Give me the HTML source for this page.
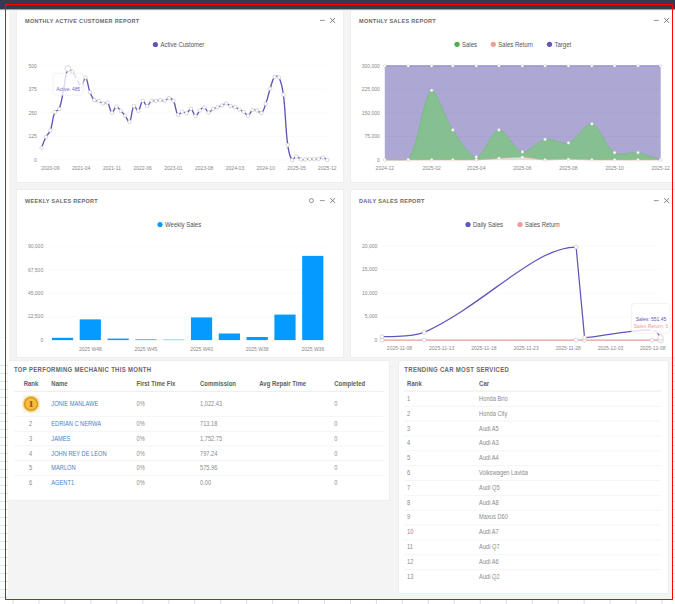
<!DOCTYPE html>
<html><head><meta charset="utf-8"><title>Dashboard</title>
<style>
html,body{margin:0;padding:0;width:675px;height:604px;overflow:hidden;background:#fff;}
svg{display:block;font-family:'Liberation Sans', sans-serif;}
</style></head>
<body>
<svg width="675" height="604" viewBox="0 0 675 604">
<rect x="0" y="0" width="675" height="604" fill="#ffffff" />
<rect x="9" y="11" width="666" height="350" fill="#f4f4f4" />
<rect x="8" y="361" width="664" height="238" fill="#f4f4f4" />
<rect x="16.5" y="10.5" width="327" height="172" rx="0" fill="none" stroke="rgba(0,0,0,0.025)" stroke-width="1"/>
<rect x="17" y="11" width="326" height="171" fill="#ffffff" rx="0"/>
<rect x="350.5" y="10.5" width="327" height="172" rx="0" fill="none" stroke="rgba(0,0,0,0.025)" stroke-width="1"/>
<rect x="351" y="11" width="326" height="171" fill="#ffffff" rx="0"/>
<rect x="16.5" y="189.5" width="327" height="168" rx="0" fill="none" stroke="rgba(0,0,0,0.025)" stroke-width="1"/>
<rect x="17" y="190" width="326" height="167" fill="#ffffff" rx="0"/>
<rect x="350.5" y="189.5" width="327" height="168" rx="0" fill="none" stroke="rgba(0,0,0,0.025)" stroke-width="1"/>
<rect x="351" y="190" width="326" height="167" fill="#ffffff" rx="0"/>
<rect x="7.5" y="360.5" width="382" height="140" rx="2" fill="none" stroke="rgba(0,0,0,0.025)" stroke-width="1"/>
<rect x="8" y="361" width="381" height="139" fill="#ffffff" rx="2"/>
<rect x="398.5" y="360.5" width="270" height="233" rx="2" fill="none" stroke="rgba(0,0,0,0.025)" stroke-width="1"/>
<rect x="399" y="361" width="269" height="232" fill="#ffffff" rx="2"/>
<text x="25.00" y="23.00" font-size="5.5" fill="#686868" text-anchor="start" font-weight="bold" letter-spacing="0.3">MONTHLY ACTIVE CUSTOMER REPORT</text>
<path d="M319.90000000000003,20.4 h4.8" stroke="#777777" stroke-width="0.8"/>
<path d="M330.1,18.0 l5,4.8 M330.1,22.799999999999997 l5,-4.8" stroke="#777777" stroke-width="0.95"/>
<circle cx="155.4" cy="44.5" r="2.6" fill="#5f56ba"/>
<text transform="translate(160.40,46.80) scale(1,1.12)" font-size="6" fill="#525252" text-anchor="start" font-weight="normal" >Active Customer</text>
<path d="M41.6,160.00 H327.3" stroke="#f6f6f6" stroke-width="0.6"/>
<text x="36.90" y="161.80" font-size="5" fill="#888888" text-anchor="end" font-weight="normal" >0</text>
<path d="M41.6,136.45 H327.3" stroke="#f6f6f6" stroke-width="0.6"/>
<text x="36.90" y="138.25" font-size="5" fill="#888888" text-anchor="end" font-weight="normal" >125</text>
<path d="M41.6,112.90 H327.3" stroke="#f6f6f6" stroke-width="0.6"/>
<text x="36.90" y="114.70" font-size="5" fill="#888888" text-anchor="end" font-weight="normal" >250</text>
<path d="M41.6,89.35 H327.3" stroke="#f6f6f6" stroke-width="0.6"/>
<text x="36.90" y="91.15" font-size="5" fill="#888888" text-anchor="end" font-weight="normal" >375</text>
<path d="M41.6,65.80 H327.3" stroke="#f6f6f6" stroke-width="0.6"/>
<text x="36.90" y="67.60" font-size="5" fill="#888888" text-anchor="end" font-weight="normal" >500</text>
<text x="50.39" y="170.00" font-size="5" fill="#888888" text-anchor="middle" font-weight="normal" >2020-09</text>
<text x="81.16" y="170.00" font-size="5" fill="#888888" text-anchor="middle" font-weight="normal" >2021-04</text>
<text x="111.93" y="170.00" font-size="5" fill="#888888" text-anchor="middle" font-weight="normal" >2021-11</text>
<text x="142.69" y="170.00" font-size="5" fill="#888888" text-anchor="middle" font-weight="normal" >2022-06</text>
<text x="173.46" y="170.00" font-size="5" fill="#888888" text-anchor="middle" font-weight="normal" >2023-01</text>
<text x="204.23" y="170.00" font-size="5" fill="#888888" text-anchor="middle" font-weight="normal" >2023-08</text>
<text x="235.00" y="170.00" font-size="5" fill="#888888" text-anchor="middle" font-weight="normal" >2024-03</text>
<text x="265.76" y="170.00" font-size="5" fill="#888888" text-anchor="middle" font-weight="normal" >2024-10</text>
<text x="296.53" y="170.00" font-size="5" fill="#888888" text-anchor="middle" font-weight="normal" >2025-05</text>
<text x="327.30" y="170.00" font-size="5" fill="#888888" text-anchor="middle" font-weight="normal" >2025-12</text>
<path d="M41.60,147.75 C41.60,147.75 43.91,141.13 46.00,137.02 C47.42,134.20 49.35,133.37 50.39,130.42 C52.86,123.42 52.06,118.81 54.79,112.15 C55.58,110.22 58.43,110.88 59.18,108.94 C61.94,101.84 61.88,97.31 63.58,89.54 C65.40,81.19 65.17,74.27 67.97,68.63 C68.69,68.63 70.99,70.20 72.37,71.83 C74.50,74.34 75.00,76.12 76.76,78.99 C78.52,81.85 79.53,86.43 81.16,86.15 C83.04,85.82 84.19,76.55 85.55,77.48 C87.71,78.96 87.74,86.49 89.95,92.18 C91.25,95.53 92.00,97.68 94.34,100.09 C95.52,101.30 97.06,100.57 98.74,101.22 C100.57,101.93 101.29,103.20 103.14,103.48 C104.81,103.73 106.52,101.47 107.53,102.54 C110.03,105.17 109.82,111.72 111.93,112.71 C113.34,113.38 114.38,107.10 116.32,106.68 C117.89,106.35 119.03,109.10 120.72,110.83 C122.55,112.71 123.46,113.68 125.11,115.73 C126.98,118.05 128.40,122.96 129.51,121.75 C131.92,119.12 131.39,109.25 133.90,106.12 C134.90,104.88 136.99,111.61 138.30,110.83 C140.51,109.50 140.54,102.00 142.69,100.84 C144.05,100.11 145.33,106.12 147.09,106.12 C148.85,106.12 149.34,102.13 151.48,100.84 C152.86,100.02 154.13,100.99 155.88,100.84 C157.65,100.69 158.52,100.09 160.28,100.09 C162.03,100.09 163.03,101.19 164.67,100.84 C166.55,100.44 167.31,98.20 169.07,98.20 C170.82,98.20 172.55,99.12 173.46,100.84 C176.06,105.75 175.28,111.58 177.86,114.78 C178.80,115.95 180.36,112.13 182.25,111.77 C183.88,111.46 185.15,113.60 186.65,113.09 C188.66,112.40 189.57,108.25 191.04,108.76 C193.09,109.46 193.52,115.73 195.44,116.10 C197.04,116.41 197.82,112.44 199.83,110.45 C201.33,108.97 202.67,107.07 204.23,107.44 C206.19,107.90 206.72,112.20 208.62,112.52 C210.23,112.80 211.10,110.10 213.02,108.94 C214.62,107.99 215.66,107.93 217.42,107.25 C219.17,106.57 220.08,106.29 221.81,105.55 C223.60,104.79 224.49,103.37 226.21,103.48 C228.01,103.60 228.74,105.32 230.60,106.12 C232.25,106.83 233.31,106.60 235.00,107.25 C236.83,107.96 237.63,108.60 239.39,109.51 C241.15,110.41 242.19,110.64 243.79,111.77 C245.70,113.12 246.61,116.06 248.18,115.73 C250.13,115.31 250.39,111.20 252.58,109.89 C253.91,109.09 255.34,109.86 256.97,110.45 C258.86,111.14 260.20,113.97 261.37,113.09 C263.71,111.33 264.38,107.69 265.76,103.86 C267.89,97.97 268.21,94.75 270.16,88.78 C271.73,83.97 271.95,80.26 274.56,76.92 C275.47,75.74 278.25,76.06 278.95,77.48 C281.76,83.15 282.44,87.62 283.35,94.63 C285.95,114.68 285.05,125.10 287.74,145.12 C288.57,151.25 289.56,156.69 292.14,160.00 C293.08,160.00 294.72,156.54 296.53,156.42 C298.24,156.31 299.00,158.77 300.93,159.43 C302.52,159.98 303.57,159.51 305.32,159.43 C307.08,159.36 307.96,159.13 309.72,159.06 C311.47,158.98 312.36,159.06 314.11,159.06 C315.87,159.06 316.80,159.35 318.51,159.06 C320.32,158.75 321.22,157.37 322.90,157.55 C324.73,157.75 327.30,160.00 327.30,160.00" fill="none" stroke="#5f56ba" stroke-width="1.35"/>
<circle cx="41.60" cy="147.75" r="1.8" fill="#fff" stroke="#c0c0c0" stroke-width="0.6"/>
<circle cx="46.00" cy="137.02" r="1.8" fill="#fff" stroke="#c0c0c0" stroke-width="0.6"/>
<circle cx="50.39" cy="130.42" r="1.8" fill="#fff" stroke="#c0c0c0" stroke-width="0.6"/>
<circle cx="54.79" cy="112.15" r="1.8" fill="#fff" stroke="#c0c0c0" stroke-width="0.6"/>
<circle cx="59.18" cy="108.94" r="1.8" fill="#fff" stroke="#c0c0c0" stroke-width="0.6"/>
<circle cx="63.58" cy="89.54" r="1.8" fill="#fff" stroke="#c0c0c0" stroke-width="0.6"/>
<circle cx="72.37" cy="71.83" r="1.8" fill="#fff" stroke="#c0c0c0" stroke-width="0.6"/>
<circle cx="76.76" cy="78.99" r="1.8" fill="#fff" stroke="#c0c0c0" stroke-width="0.6"/>
<circle cx="81.16" cy="86.15" r="1.8" fill="#fff" stroke="#c0c0c0" stroke-width="0.6"/>
<circle cx="85.55" cy="77.48" r="1.8" fill="#fff" stroke="#c0c0c0" stroke-width="0.6"/>
<circle cx="89.95" cy="92.18" r="1.8" fill="#fff" stroke="#c0c0c0" stroke-width="0.6"/>
<circle cx="94.34" cy="100.09" r="1.8" fill="#fff" stroke="#c0c0c0" stroke-width="0.6"/>
<circle cx="98.74" cy="101.22" r="1.8" fill="#fff" stroke="#c0c0c0" stroke-width="0.6"/>
<circle cx="103.14" cy="103.48" r="1.8" fill="#fff" stroke="#c0c0c0" stroke-width="0.6"/>
<circle cx="107.53" cy="102.54" r="1.8" fill="#fff" stroke="#c0c0c0" stroke-width="0.6"/>
<circle cx="111.93" cy="112.71" r="1.8" fill="#fff" stroke="#c0c0c0" stroke-width="0.6"/>
<circle cx="116.32" cy="106.68" r="1.8" fill="#fff" stroke="#c0c0c0" stroke-width="0.6"/>
<circle cx="120.72" cy="110.83" r="1.8" fill="#fff" stroke="#c0c0c0" stroke-width="0.6"/>
<circle cx="125.11" cy="115.73" r="1.8" fill="#fff" stroke="#c0c0c0" stroke-width="0.6"/>
<circle cx="129.51" cy="121.75" r="1.8" fill="#fff" stroke="#c0c0c0" stroke-width="0.6"/>
<circle cx="133.90" cy="106.12" r="1.8" fill="#fff" stroke="#c0c0c0" stroke-width="0.6"/>
<circle cx="138.30" cy="110.83" r="1.8" fill="#fff" stroke="#c0c0c0" stroke-width="0.6"/>
<circle cx="142.69" cy="100.84" r="1.8" fill="#fff" stroke="#c0c0c0" stroke-width="0.6"/>
<circle cx="147.09" cy="106.12" r="1.8" fill="#fff" stroke="#c0c0c0" stroke-width="0.6"/>
<circle cx="151.48" cy="100.84" r="1.8" fill="#fff" stroke="#c0c0c0" stroke-width="0.6"/>
<circle cx="155.88" cy="100.84" r="1.8" fill="#fff" stroke="#c0c0c0" stroke-width="0.6"/>
<circle cx="160.28" cy="100.09" r="1.8" fill="#fff" stroke="#c0c0c0" stroke-width="0.6"/>
<circle cx="164.67" cy="100.84" r="1.8" fill="#fff" stroke="#c0c0c0" stroke-width="0.6"/>
<circle cx="169.07" cy="98.20" r="1.8" fill="#fff" stroke="#c0c0c0" stroke-width="0.6"/>
<circle cx="173.46" cy="100.84" r="1.8" fill="#fff" stroke="#c0c0c0" stroke-width="0.6"/>
<circle cx="177.86" cy="114.78" r="1.8" fill="#fff" stroke="#c0c0c0" stroke-width="0.6"/>
<circle cx="182.25" cy="111.77" r="1.8" fill="#fff" stroke="#c0c0c0" stroke-width="0.6"/>
<circle cx="186.65" cy="113.09" r="1.8" fill="#fff" stroke="#c0c0c0" stroke-width="0.6"/>
<circle cx="191.04" cy="108.76" r="1.8" fill="#fff" stroke="#c0c0c0" stroke-width="0.6"/>
<circle cx="195.44" cy="116.10" r="1.8" fill="#fff" stroke="#c0c0c0" stroke-width="0.6"/>
<circle cx="199.83" cy="110.45" r="1.8" fill="#fff" stroke="#c0c0c0" stroke-width="0.6"/>
<circle cx="204.23" cy="107.44" r="1.8" fill="#fff" stroke="#c0c0c0" stroke-width="0.6"/>
<circle cx="208.62" cy="112.52" r="1.8" fill="#fff" stroke="#c0c0c0" stroke-width="0.6"/>
<circle cx="213.02" cy="108.94" r="1.8" fill="#fff" stroke="#c0c0c0" stroke-width="0.6"/>
<circle cx="217.42" cy="107.25" r="1.8" fill="#fff" stroke="#c0c0c0" stroke-width="0.6"/>
<circle cx="221.81" cy="105.55" r="1.8" fill="#fff" stroke="#c0c0c0" stroke-width="0.6"/>
<circle cx="226.21" cy="103.48" r="1.8" fill="#fff" stroke="#c0c0c0" stroke-width="0.6"/>
<circle cx="230.60" cy="106.12" r="1.8" fill="#fff" stroke="#c0c0c0" stroke-width="0.6"/>
<circle cx="235.00" cy="107.25" r="1.8" fill="#fff" stroke="#c0c0c0" stroke-width="0.6"/>
<circle cx="239.39" cy="109.51" r="1.8" fill="#fff" stroke="#c0c0c0" stroke-width="0.6"/>
<circle cx="243.79" cy="111.77" r="1.8" fill="#fff" stroke="#c0c0c0" stroke-width="0.6"/>
<circle cx="248.18" cy="115.73" r="1.8" fill="#fff" stroke="#c0c0c0" stroke-width="0.6"/>
<circle cx="252.58" cy="109.89" r="1.8" fill="#fff" stroke="#c0c0c0" stroke-width="0.6"/>
<circle cx="256.97" cy="110.45" r="1.8" fill="#fff" stroke="#c0c0c0" stroke-width="0.6"/>
<circle cx="261.37" cy="113.09" r="1.8" fill="#fff" stroke="#c0c0c0" stroke-width="0.6"/>
<circle cx="265.76" cy="103.86" r="1.8" fill="#fff" stroke="#c0c0c0" stroke-width="0.6"/>
<circle cx="270.16" cy="88.78" r="1.8" fill="#fff" stroke="#c0c0c0" stroke-width="0.6"/>
<circle cx="274.56" cy="76.92" r="1.8" fill="#fff" stroke="#c0c0c0" stroke-width="0.6"/>
<circle cx="278.95" cy="77.48" r="1.8" fill="#fff" stroke="#c0c0c0" stroke-width="0.6"/>
<circle cx="283.35" cy="94.63" r="1.8" fill="#fff" stroke="#c0c0c0" stroke-width="0.6"/>
<circle cx="287.74" cy="145.12" r="1.8" fill="#fff" stroke="#c0c0c0" stroke-width="0.6"/>
<circle cx="292.14" cy="160.00" r="1.8" fill="#fff" stroke="#c0c0c0" stroke-width="0.6"/>
<circle cx="296.53" cy="156.42" r="1.8" fill="#fff" stroke="#c0c0c0" stroke-width="0.6"/>
<circle cx="300.93" cy="159.43" r="1.8" fill="#fff" stroke="#c0c0c0" stroke-width="0.6"/>
<circle cx="305.32" cy="159.43" r="1.8" fill="#fff" stroke="#c0c0c0" stroke-width="0.6"/>
<circle cx="309.72" cy="159.06" r="1.8" fill="#fff" stroke="#c0c0c0" stroke-width="0.6"/>
<circle cx="314.11" cy="159.06" r="1.8" fill="#fff" stroke="#c0c0c0" stroke-width="0.6"/>
<circle cx="318.51" cy="159.06" r="1.8" fill="#fff" stroke="#c0c0c0" stroke-width="0.6"/>
<circle cx="322.90" cy="157.55" r="1.8" fill="#fff" stroke="#c0c0c0" stroke-width="0.6"/>
<circle cx="327.30" cy="160.00" r="1.8" fill="#fff" stroke="#c0c0c0" stroke-width="0.6"/>
<circle cx="67.97" cy="68.63" r="2.9" fill="#fff" stroke="#bbbbbb" stroke-width="0.6"/>
<rect x="53.1" y="73.2" width="30.2" height="22" rx="3" fill="rgba(255,255,255,0.78)" stroke="#e3e3e3" stroke-width="0.5"/>
<text x="56.30" y="90.50" font-size="4.8" fill="#6f66c4" text-anchor="start" font-weight="normal" >Active: 485</text>
<text x="359.00" y="23.00" font-size="5.5" fill="#686868" text-anchor="start" font-weight="bold" letter-spacing="0.3">MONTHLY SALES REPORT</text>
<path d="M653.9,20.4 h4.8" stroke="#777777" stroke-width="0.8"/>
<path d="M664.1,18.0 l5,4.8 M664.1,22.799999999999997 l5,-4.8" stroke="#777777" stroke-width="0.95"/>
<circle cx="457" cy="44.3" r="2.6" fill="#4cae4f"/>
<text transform="translate(462.00,46.60) scale(1,1.12)" font-size="6" fill="#525252" text-anchor="start" font-weight="normal" >Sales</text>
<circle cx="493.3" cy="44.3" r="2.6" fill="#f39a9a"/>
<text transform="translate(498.30,46.60) scale(1,1.12)" font-size="6" fill="#525252" text-anchor="start" font-weight="normal" >Sales Return</text>
<circle cx="549.5" cy="44.3" r="2.6" fill="#5f56ba"/>
<text transform="translate(554.50,46.60) scale(1,1.12)" font-size="6" fill="#525252" text-anchor="start" font-weight="normal" >Target</text>
<path d="M384.8,160.00 H660.7" stroke="#eeeeee" stroke-width="0.6"/>
<text x="379.80" y="161.80" font-size="5" fill="#888888" text-anchor="end" font-weight="normal" >0</text>
<path d="M384.8,136.45 H660.7" stroke="#eeeeee" stroke-width="0.6"/>
<text x="379.80" y="138.25" font-size="5" fill="#888888" text-anchor="end" font-weight="normal" >75,000</text>
<path d="M384.8,112.90 H660.7" stroke="#eeeeee" stroke-width="0.6"/>
<text x="379.80" y="114.70" font-size="5" fill="#888888" text-anchor="end" font-weight="normal" >150,000</text>
<path d="M384.8,89.35 H660.7" stroke="#eeeeee" stroke-width="0.6"/>
<text x="379.80" y="91.15" font-size="5" fill="#888888" text-anchor="end" font-weight="normal" >225,000</text>
<path d="M384.8,65.80 H660.7" stroke="#eeeeee" stroke-width="0.6"/>
<text x="379.80" y="67.60" font-size="5" fill="#888888" text-anchor="end" font-weight="normal" >300,000</text>
<text x="384.80" y="170.00" font-size="5" fill="#888888" text-anchor="middle" font-weight="normal" >2024-12</text>
<text x="431.67" y="170.00" font-size="5" fill="#888888" text-anchor="middle" font-weight="normal" >2025-02</text>
<text x="476.26" y="170.00" font-size="5" fill="#888888" text-anchor="middle" font-weight="normal" >2025-04</text>
<text x="522.37" y="170.00" font-size="5" fill="#888888" text-anchor="middle" font-weight="normal" >2025-06</text>
<text x="568.48" y="170.00" font-size="5" fill="#888888" text-anchor="middle" font-weight="normal" >2025-08</text>
<text x="614.59" y="170.00" font-size="5" fill="#888888" text-anchor="middle" font-weight="normal" >2025-10</text>
<text x="660.70" y="170.00" font-size="5" fill="#888888" text-anchor="middle" font-weight="normal" >2025-12</text>
<path d="M384.80,65.80 C384.80,65.80 401.20,65.80 408.23,65.80 C415.26,65.80 424.64,65.80 431.67,65.80 C438.01,65.80 446.48,65.80 452.83,65.80 C459.86,65.80 469.23,65.80 476.26,65.80 C483.07,65.80 492.14,65.80 498.94,65.80 C505.97,65.80 515.34,65.80 522.37,65.80 C529.18,65.80 538.25,65.80 545.05,65.80 C552.08,65.80 561.45,65.80 568.48,65.80 C575.51,65.80 584.88,65.80 591.91,65.80 C598.72,65.80 607.79,65.80 614.59,65.80 C621.62,65.80 630.99,65.80 638.02,65.80 C644.83,65.80 660.70,65.80 660.70,65.80 L660.70,160.0 L384.80,160.0 Z" fill="rgba(89,79,167,0.5)" stroke="none"/>
<path d="M384.80,65.80 C384.80,65.80 401.20,65.80 408.23,65.80 C415.26,65.80 424.64,65.80 431.67,65.80 C438.01,65.80 446.48,65.80 452.83,65.80 C459.86,65.80 469.23,65.80 476.26,65.80 C483.07,65.80 492.14,65.80 498.94,65.80 C505.97,65.80 515.34,65.80 522.37,65.80 C529.18,65.80 538.25,65.80 545.05,65.80 C552.08,65.80 561.45,65.80 568.48,65.80 C575.51,65.80 584.88,65.80 591.91,65.80 C598.72,65.80 607.79,65.80 614.59,65.80 C621.62,65.80 630.99,65.80 638.02,65.80 C644.83,65.80 660.70,65.80 660.70,65.80" fill="none" stroke="#9a90cc" stroke-width="1.2"/>
<path d="M384.80,160.00 C384.80,160.00 404.84,160.00 408.23,160.00 C418.89,144.14 423.37,95.87 431.67,90.29 C436.74,90.29 445.37,118.86 452.83,130.01 C458.75,138.87 469.30,157.02 476.26,157.02 C483.13,157.02 491.69,130.82 498.94,130.01 C505.53,129.28 514.72,150.34 522.37,151.90 C528.55,153.16 537.83,140.81 545.05,139.40 C551.66,138.11 562.30,144.93 568.48,142.89 C576.36,140.28 585.67,122.56 591.91,123.89 C599.50,125.51 606.15,147.44 614.59,152.72 C619.98,156.09 631.16,151.63 638.02,152.72 C645.00,153.82 660.70,160.00 660.70,160.00 L660.70,160.0 L384.80,160.0 Z" fill="#86c091" stroke="none"/>
<path d="M384.80,160.00 C384.80,160.00 404.84,160.00 408.23,160.00 C418.89,144.14 423.37,95.87 431.67,90.29 C436.74,90.29 445.37,118.86 452.83,130.01 C458.75,138.87 469.30,157.02 476.26,157.02 C483.13,157.02 491.69,130.82 498.94,130.01 C505.53,129.28 514.72,150.34 522.37,151.90 C528.55,153.16 537.83,140.81 545.05,139.40 C551.66,138.11 562.30,144.93 568.48,142.89 C576.36,140.28 585.67,122.56 591.91,123.89 C599.50,125.51 606.15,147.44 614.59,152.72 C619.98,156.09 631.16,151.63 638.02,152.72 C645.00,153.82 660.70,160.00 660.70,160.00" fill="none" stroke="#6cba74" stroke-width="0.6"/>
<path d="M384.80,160.00 C384.80,160.00 401.20,160.00 408.23,160.00 C415.26,160.00 424.64,160.00 431.67,160.00 C438.01,160.00 446.48,160.00 452.83,160.00 C459.86,160.00 469.24,160.00 476.26,160.00 C483.07,159.77 492.13,158.83 498.94,158.43 C505.96,158.02 515.36,157.30 522.37,157.30 C529.20,157.53 538.22,159.70 545.05,160.00 C552.06,160.00 561.45,159.31 568.48,159.31 C575.51,159.31 584.88,159.89 591.91,160.00 C598.72,160.00 607.79,160.00 614.59,160.00 C621.62,160.00 630.99,160.00 638.02,160.00 C644.83,160.00 660.70,160.00 660.70,160.00 L660.70,160.0 L384.80,160.0 Z" fill="#dfe0d8" stroke="none"/>
<path d="M384.80,160.00 C384.80,160.00 401.20,160.00 408.23,160.00 C415.26,160.00 424.64,160.00 431.67,160.00 C438.01,160.00 446.48,160.00 452.83,160.00 C459.86,160.00 469.24,160.00 476.26,160.00 C483.07,159.77 492.13,158.83 498.94,158.43 C505.96,158.02 515.36,157.30 522.37,157.30 C529.20,157.53 538.22,159.70 545.05,160.00 C552.06,160.00 561.45,159.31 568.48,159.31 C575.51,159.31 584.88,159.89 591.91,160.00 C598.72,160.00 607.79,160.00 614.59,160.00 C621.62,160.00 630.99,160.00 638.02,160.00 C644.83,160.00 660.70,160.00 660.70,160.00" fill="none" stroke="#f0a8a0" stroke-width="0.6"/>
<circle cx="384.80" cy="65.80" r="1.4" fill="#fff" stroke="#c8c8c8" stroke-width="0.4"/>
<circle cx="408.23" cy="65.80" r="1.4" fill="#fff" stroke="#c8c8c8" stroke-width="0.4"/>
<circle cx="431.67" cy="65.80" r="1.4" fill="#fff" stroke="#c8c8c8" stroke-width="0.4"/>
<circle cx="452.83" cy="65.80" r="1.4" fill="#fff" stroke="#c8c8c8" stroke-width="0.4"/>
<circle cx="476.26" cy="65.80" r="1.4" fill="#fff" stroke="#c8c8c8" stroke-width="0.4"/>
<circle cx="498.94" cy="65.80" r="1.4" fill="#fff" stroke="#c8c8c8" stroke-width="0.4"/>
<circle cx="522.37" cy="65.80" r="1.4" fill="#fff" stroke="#c8c8c8" stroke-width="0.4"/>
<circle cx="545.05" cy="65.80" r="1.4" fill="#fff" stroke="#c8c8c8" stroke-width="0.4"/>
<circle cx="568.48" cy="65.80" r="1.4" fill="#fff" stroke="#c8c8c8" stroke-width="0.4"/>
<circle cx="591.91" cy="65.80" r="1.4" fill="#fff" stroke="#c8c8c8" stroke-width="0.4"/>
<circle cx="614.59" cy="65.80" r="1.4" fill="#fff" stroke="#c8c8c8" stroke-width="0.4"/>
<circle cx="638.02" cy="65.80" r="1.4" fill="#fff" stroke="#c8c8c8" stroke-width="0.4"/>
<circle cx="660.70" cy="65.80" r="1.4" fill="#fff" stroke="#c8c8c8" stroke-width="0.4"/>
<circle cx="384.80" cy="160.00" r="1.4" fill="#fff" stroke="#c8c8c8" stroke-width="0.4"/>
<circle cx="408.23" cy="160.00" r="1.4" fill="#fff" stroke="#c8c8c8" stroke-width="0.4"/>
<circle cx="431.67" cy="90.29" r="1.4" fill="#fff" stroke="#c8c8c8" stroke-width="0.4"/>
<circle cx="452.83" cy="130.01" r="1.4" fill="#fff" stroke="#c8c8c8" stroke-width="0.4"/>
<circle cx="476.26" cy="157.02" r="1.4" fill="#fff" stroke="#c8c8c8" stroke-width="0.4"/>
<circle cx="498.94" cy="130.01" r="1.4" fill="#fff" stroke="#c8c8c8" stroke-width="0.4"/>
<circle cx="522.37" cy="151.90" r="1.4" fill="#fff" stroke="#c8c8c8" stroke-width="0.4"/>
<circle cx="545.05" cy="139.40" r="1.4" fill="#fff" stroke="#c8c8c8" stroke-width="0.4"/>
<circle cx="568.48" cy="142.89" r="1.4" fill="#fff" stroke="#c8c8c8" stroke-width="0.4"/>
<circle cx="591.91" cy="123.89" r="1.4" fill="#fff" stroke="#c8c8c8" stroke-width="0.4"/>
<circle cx="614.59" cy="152.72" r="1.4" fill="#fff" stroke="#c8c8c8" stroke-width="0.4"/>
<circle cx="638.02" cy="152.72" r="1.4" fill="#fff" stroke="#c8c8c8" stroke-width="0.4"/>
<circle cx="660.70" cy="160.00" r="1.4" fill="#fff" stroke="#c8c8c8" stroke-width="0.4"/>
<circle cx="384.80" cy="160.00" r="1.4" fill="#fff" stroke="#c8c8c8" stroke-width="0.4"/>
<circle cx="408.23" cy="160.00" r="1.4" fill="#fff" stroke="#c8c8c8" stroke-width="0.4"/>
<circle cx="431.67" cy="160.00" r="1.4" fill="#fff" stroke="#c8c8c8" stroke-width="0.4"/>
<circle cx="452.83" cy="160.00" r="1.4" fill="#fff" stroke="#c8c8c8" stroke-width="0.4"/>
<circle cx="476.26" cy="160.00" r="1.4" fill="#fff" stroke="#c8c8c8" stroke-width="0.4"/>
<circle cx="498.94" cy="158.43" r="1.4" fill="#fff" stroke="#c8c8c8" stroke-width="0.4"/>
<circle cx="522.37" cy="157.30" r="1.4" fill="#fff" stroke="#c8c8c8" stroke-width="0.4"/>
<circle cx="545.05" cy="160.00" r="1.4" fill="#fff" stroke="#c8c8c8" stroke-width="0.4"/>
<circle cx="568.48" cy="159.31" r="1.4" fill="#fff" stroke="#c8c8c8" stroke-width="0.4"/>
<circle cx="591.91" cy="160.00" r="1.4" fill="#fff" stroke="#c8c8c8" stroke-width="0.4"/>
<circle cx="614.59" cy="160.00" r="1.4" fill="#fff" stroke="#c8c8c8" stroke-width="0.4"/>
<circle cx="638.02" cy="160.00" r="1.4" fill="#fff" stroke="#c8c8c8" stroke-width="0.4"/>
<circle cx="660.70" cy="160.00" r="1.4" fill="#fff" stroke="#c8c8c8" stroke-width="0.4"/>
<text x="25.00" y="203.00" font-size="5.5" fill="#686868" text-anchor="start" font-weight="bold" letter-spacing="0.3">WEEKLY SALES REPORT</text>
<path d="M319.90000000000003,200.6 h4.8" stroke="#777777" stroke-width="0.8"/>
<path d="M330.1,198.2 l5,4.8 M330.1,203.0 l5,-4.8" stroke="#777777" stroke-width="0.95"/>
<circle cx="311.40000000000003" cy="200.6" r="2" fill="none" stroke="#777777" stroke-width="0.8"/>
<circle cx="160" cy="224.5" r="2.6" fill="#049aff"/>
<text transform="translate(165.00,226.80) scale(1,1.12)" font-size="6" fill="#525252" text-anchor="start" font-weight="normal" >Weekly Sales</text>
<path d="M47.2,340.10 H327.4" stroke="#f6f6f6" stroke-width="0.6"/>
<text x="43.20" y="341.90" font-size="5" fill="#888888" text-anchor="end" font-weight="normal" >0</text>
<path d="M47.2,316.68 H327.4" stroke="#f6f6f6" stroke-width="0.6"/>
<text x="43.20" y="318.48" font-size="5" fill="#888888" text-anchor="end" font-weight="normal" >22,500</text>
<path d="M47.2,293.25 H327.4" stroke="#f6f6f6" stroke-width="0.6"/>
<text x="43.20" y="295.05" font-size="5" fill="#888888" text-anchor="end" font-weight="normal" >45,000</text>
<path d="M47.2,269.83 H327.4" stroke="#f6f6f6" stroke-width="0.6"/>
<text x="43.20" y="271.63" font-size="5" fill="#888888" text-anchor="end" font-weight="normal" >67,500</text>
<path d="M47.2,246.40 H327.4" stroke="#f6f6f6" stroke-width="0.6"/>
<text x="43.20" y="248.20" font-size="5" fill="#888888" text-anchor="end" font-weight="normal" >90,000</text>
<rect x="51.90" y="337.81" width="21.2" height="2.29" fill="#049aff"/>
<rect x="79.71" y="319.38" width="21.2" height="20.72" fill="#049aff"/>
<rect x="107.52" y="338.60" width="21.2" height="1.50" fill="#049aff"/>
<rect x="135.33" y="339.40" width="21.2" height="0.70" fill="#049aff"/>
<rect x="163.14" y="339.70" width="21.2" height="0.40" fill="#049aff"/>
<rect x="190.95" y="317.40" width="21.2" height="22.70" fill="#049aff"/>
<rect x="218.76" y="333.50" width="21.2" height="6.60" fill="#049aff"/>
<rect x="246.57" y="337.00" width="21.2" height="3.10" fill="#049aff"/>
<rect x="274.38" y="314.59" width="21.2" height="25.51" fill="#049aff"/>
<rect x="302.19" y="255.87" width="21.2" height="84.23" fill="#049aff"/>
<text x="90.31" y="350.60" font-size="5" fill="#888888" text-anchor="middle" font-weight="normal" >2025 W48</text>
<text x="145.93" y="350.60" font-size="5" fill="#888888" text-anchor="middle" font-weight="normal" >2025 W45</text>
<text x="201.55" y="350.60" font-size="5" fill="#888888" text-anchor="middle" font-weight="normal" >2025 W40</text>
<text x="257.17" y="350.60" font-size="5" fill="#888888" text-anchor="middle" font-weight="normal" >2025 W38</text>
<text x="312.79" y="350.60" font-size="5" fill="#888888" text-anchor="middle" font-weight="normal" >2025 W36</text>
<text x="359.00" y="203.00" font-size="5.5" fill="#686868" text-anchor="start" font-weight="bold" letter-spacing="0.3">DAILY SALES REPORT</text>
<path d="M653.9,200.6 h4.8" stroke="#777777" stroke-width="0.8"/>
<path d="M664.1,198.2 l5,4.8 M664.1,203.0 l5,-4.8" stroke="#777777" stroke-width="0.95"/>
<circle cx="468" cy="224.5" r="2.6" fill="#5f56ba"/>
<text transform="translate(473.00,226.80) scale(1,1.12)" font-size="6" fill="#525252" text-anchor="start" font-weight="normal" >Daily Sales</text>
<circle cx="520" cy="224.5" r="2.6" fill="#f39a9a"/>
<text transform="translate(525.00,226.80) scale(1,1.12)" font-size="6" fill="#525252" text-anchor="start" font-weight="normal" >Sales Return</text>
<path d="M382.0,340.20 H660.5" stroke="#f6f6f6" stroke-width="0.6"/>
<text x="377.30" y="342.00" font-size="5" fill="#888888" text-anchor="end" font-weight="normal" >0</text>
<path d="M382.0,316.68 H660.5" stroke="#f6f6f6" stroke-width="0.6"/>
<text x="377.30" y="318.48" font-size="5" fill="#888888" text-anchor="end" font-weight="normal" >5,000</text>
<path d="M382.0,293.15 H660.5" stroke="#f6f6f6" stroke-width="0.6"/>
<text x="377.30" y="294.95" font-size="5" fill="#888888" text-anchor="end" font-weight="normal" >10,000</text>
<path d="M382.0,269.62 H660.5" stroke="#f6f6f6" stroke-width="0.6"/>
<text x="377.30" y="271.43" font-size="5" fill="#888888" text-anchor="end" font-weight="normal" >15,000</text>
<path d="M382.0,246.10 H660.5" stroke="#f6f6f6" stroke-width="0.6"/>
<text x="377.30" y="247.90" font-size="5" fill="#888888" text-anchor="end" font-weight="normal" >20,000</text>
<text x="399.48" y="350.20" font-size="5" fill="#888888" text-anchor="middle" font-weight="normal" >2025-11-08</text>
<text x="441.68" y="350.20" font-size="5" fill="#888888" text-anchor="middle" font-weight="normal" >2025-11-13</text>
<text x="483.88" y="350.20" font-size="5" fill="#888888" text-anchor="middle" font-weight="normal" >2025-11-18</text>
<text x="526.08" y="350.20" font-size="5" fill="#888888" text-anchor="middle" font-weight="normal" >2025-11-23</text>
<text x="568.28" y="350.20" font-size="5" fill="#888888" text-anchor="middle" font-weight="normal" >2025-11-28</text>
<text x="610.48" y="350.20" font-size="5" fill="#888888" text-anchor="middle" font-weight="normal" >2025-12-03</text>
<text x="652.68" y="350.20" font-size="5" fill="#888888" text-anchor="middle" font-weight="normal" >2025-12-08</text>
<path d="M382.00,340.20 C382.00,340.20 407.32,340.20 424.20,340.20 C484.97,340.20 515.35,340.20 576.12,340.20 C579.50,340.20 581.18,340.20 584.56,340.20 C611.57,340.20 625.07,340.20 652.08,340.20 C655.46,340.20 660.52,340.20 660.52,340.20" fill="none" stroke="#f29a9a" stroke-width="1.2"/>
<path d="M382.00,336.60 C382.00,336.60 409.00,337.61 424.20,332.39 C486.65,303.59 533.97,247.09 576.12,247.09 C578.65,274.25 582.03,310.45 584.56,337.61 C597.56,337.61 626.08,329.85 652.08,329.85 C656.46,329.85 660.52,337.61 660.52,337.61" fill="none" stroke="#5f56ba" stroke-width="1.25"/>
<circle cx="382.00" cy="340.20" r="1.9" fill="#fff" stroke="#bdbdbd" stroke-width="0.6"/>
<circle cx="424.20" cy="340.20" r="1.9" fill="#fff" stroke="#bdbdbd" stroke-width="0.6"/>
<circle cx="576.12" cy="340.20" r="1.9" fill="#fff" stroke="#bdbdbd" stroke-width="0.6"/>
<circle cx="584.56" cy="340.20" r="1.9" fill="#fff" stroke="#bdbdbd" stroke-width="0.6"/>
<circle cx="652.08" cy="340.20" r="1.9" fill="#fff" stroke="#bdbdbd" stroke-width="0.6"/>
<circle cx="660.52" cy="340.20" r="2.7" fill="#fff" stroke="#bdbdbd" stroke-width="0.6"/>
<circle cx="382.00" cy="336.60" r="1.9" fill="#fff" stroke="#bdbdbd" stroke-width="0.6"/>
<circle cx="424.20" cy="332.39" r="1.9" fill="#fff" stroke="#bdbdbd" stroke-width="0.6"/>
<circle cx="576.12" cy="247.09" r="1.9" fill="#fff" stroke="#bdbdbd" stroke-width="0.6"/>
<circle cx="584.56" cy="337.61" r="1.9" fill="#fff" stroke="#bdbdbd" stroke-width="0.6"/>
<circle cx="652.08" cy="329.85" r="1.9" fill="#fff" stroke="#bdbdbd" stroke-width="0.6"/>
<circle cx="660.52" cy="337.61" r="2.7" fill="#fff" stroke="#bdbdbd" stroke-width="0.6"/>
<rect x="631.4" y="303.4" width="38.7" height="29.8" rx="3" fill="rgba(255,255,255,0.8)" stroke="#e3e3e3" stroke-width="0.5"/>
<text x="651.00" y="321.00" font-size="5" fill="#5f56ba" text-anchor="middle" font-weight="normal" >Sales: 551.45</text>
<text x="651.00" y="327.80" font-size="5" fill="#f39a9a" text-anchor="middle" font-weight="normal" >Sales Return: 0</text>
<text transform="translate(14.00,371.80) scale(1,1.12)" font-size="6" fill="#686868" text-anchor="start" font-weight="bold" letter-spacing="0.3">TOP PERFORMING MECHANIC THIS MONTH</text>
<text transform="translate(23.70,385.70) scale(1,1.12)" font-size="6" fill="#5e5e5e" text-anchor="start" font-weight="bold" >Rank</text>
<text transform="translate(51.30,385.70) scale(1,1.12)" font-size="6" fill="#5e5e5e" text-anchor="start" font-weight="bold" >Name</text>
<text transform="translate(136.60,385.70) scale(1,1.12)" font-size="6" fill="#5e5e5e" text-anchor="start" font-weight="bold" >First Time Fix</text>
<text transform="translate(200.00,385.70) scale(1,1.12)" font-size="6" fill="#5e5e5e" text-anchor="start" font-weight="bold" >Commission</text>
<text transform="translate(259.20,385.70) scale(1,1.12)" font-size="6" fill="#5e5e5e" text-anchor="start" font-weight="bold" >Avg Repair Time</text>
<text transform="translate(334.20,385.70) scale(1,1.12)" font-size="6" fill="#5e5e5e" text-anchor="start" font-weight="bold" >Completed</text>
<path d="M14,391.3 H383.7" stroke="#e6e6e6" stroke-width="0.8"/>
<text transform="translate(51.30,406.20) scale(1,1.12)" font-size="5.7" fill="#4a82c2" text-anchor="start" font-weight="normal" >JONIE MANLAWE</text>
<text transform="translate(136.60,406.20) scale(1,1.12)" font-size="5.7" fill="#8a8a8a" text-anchor="start" font-weight="normal" >0%</text>
<text transform="translate(200.00,406.20) scale(1,1.12)" font-size="5.7" fill="#8a8a8a" text-anchor="start" font-weight="normal" >1,022.43</text>
<text transform="translate(334.20,406.20) scale(1,1.12)" font-size="5.7" fill="#8a8a8a" text-anchor="start" font-weight="normal" >0</text>
<text transform="translate(30.70,426.00) scale(1,1.12)" font-size="5.7" fill="#8a8a8a" text-anchor="middle" font-weight="normal" >2</text>
<text transform="translate(51.30,426.00) scale(1,1.12)" font-size="5.7" fill="#4a82c2" text-anchor="start" font-weight="normal" >EDRIAN C NERWA</text>
<text transform="translate(136.60,426.00) scale(1,1.12)" font-size="5.7" fill="#8a8a8a" text-anchor="start" font-weight="normal" >0%</text>
<text transform="translate(200.00,426.00) scale(1,1.12)" font-size="5.7" fill="#8a8a8a" text-anchor="start" font-weight="normal" >713.18</text>
<text transform="translate(334.20,426.00) scale(1,1.12)" font-size="5.7" fill="#8a8a8a" text-anchor="start" font-weight="normal" >0</text>
<text transform="translate(30.70,440.70) scale(1,1.12)" font-size="5.7" fill="#8a8a8a" text-anchor="middle" font-weight="normal" >3</text>
<text transform="translate(51.30,440.70) scale(1,1.12)" font-size="5.7" fill="#4a82c2" text-anchor="start" font-weight="normal" >JAMES</text>
<text transform="translate(136.60,440.70) scale(1,1.12)" font-size="5.7" fill="#8a8a8a" text-anchor="start" font-weight="normal" >0%</text>
<text transform="translate(200.00,440.70) scale(1,1.12)" font-size="5.7" fill="#8a8a8a" text-anchor="start" font-weight="normal" >1,752.75</text>
<text transform="translate(334.20,440.70) scale(1,1.12)" font-size="5.7" fill="#8a8a8a" text-anchor="start" font-weight="normal" >0</text>
<text transform="translate(30.70,455.60) scale(1,1.12)" font-size="5.7" fill="#8a8a8a" text-anchor="middle" font-weight="normal" >4</text>
<text transform="translate(51.30,455.60) scale(1,1.12)" font-size="5.7" fill="#4a82c2" text-anchor="start" font-weight="normal" >JOHN REY DE LEON</text>
<text transform="translate(136.60,455.60) scale(1,1.12)" font-size="5.7" fill="#8a8a8a" text-anchor="start" font-weight="normal" >0%</text>
<text transform="translate(200.00,455.60) scale(1,1.12)" font-size="5.7" fill="#8a8a8a" text-anchor="start" font-weight="normal" >797.24</text>
<text transform="translate(334.20,455.60) scale(1,1.12)" font-size="5.7" fill="#8a8a8a" text-anchor="start" font-weight="normal" >0</text>
<text transform="translate(30.70,470.30) scale(1,1.12)" font-size="5.7" fill="#8a8a8a" text-anchor="middle" font-weight="normal" >5</text>
<text transform="translate(51.30,470.30) scale(1,1.12)" font-size="5.7" fill="#4a82c2" text-anchor="start" font-weight="normal" >MARLON</text>
<text transform="translate(136.60,470.30) scale(1,1.12)" font-size="5.7" fill="#8a8a8a" text-anchor="start" font-weight="normal" >0%</text>
<text transform="translate(200.00,470.30) scale(1,1.12)" font-size="5.7" fill="#8a8a8a" text-anchor="start" font-weight="normal" >575.96</text>
<text transform="translate(334.20,470.30) scale(1,1.12)" font-size="5.7" fill="#8a8a8a" text-anchor="start" font-weight="normal" >0</text>
<text transform="translate(30.70,485.10) scale(1,1.12)" font-size="5.7" fill="#8a8a8a" text-anchor="middle" font-weight="normal" >6</text>
<text transform="translate(51.30,485.10) scale(1,1.12)" font-size="5.7" fill="#4a82c2" text-anchor="start" font-weight="normal" >AGENT1</text>
<text transform="translate(136.60,485.10) scale(1,1.12)" font-size="5.7" fill="#8a8a8a" text-anchor="start" font-weight="normal" >0%</text>
<text transform="translate(200.00,485.10) scale(1,1.12)" font-size="5.7" fill="#8a8a8a" text-anchor="start" font-weight="normal" >0.00</text>
<text transform="translate(334.20,485.10) scale(1,1.12)" font-size="5.7" fill="#8a8a8a" text-anchor="start" font-weight="normal" >0</text>
<path d="M14,416.3 H383.7" stroke="#ececec" stroke-width="0.6"/>
<path d="M14,431.3 H383.7" stroke="#ececec" stroke-width="0.6"/>
<path d="M14,446 H383.7" stroke="#ececec" stroke-width="0.6"/>
<path d="M14,460.7 H383.7" stroke="#ececec" stroke-width="0.6"/>
<path d="M14,475.3 H383.7" stroke="#ececec" stroke-width="0.6"/>
<rect x="22" y="394.8" width="18" height="18.2" fill="#f8f8f8" />
<polygon points="40.00,403.90 38.61,405.10 39.56,406.68 37.86,407.40 38.28,409.19 36.44,409.34 36.29,411.18 34.50,410.76 33.78,412.46 32.20,411.51 31.00,412.90 29.80,411.51 28.22,412.46 27.50,410.76 25.71,411.18 25.56,409.34 23.72,409.19 24.14,407.40 22.44,406.68 23.39,405.10 22.00,403.90 23.39,402.70 22.44,401.12 24.14,400.40 23.72,398.61 25.56,398.46 25.71,396.62 27.50,397.04 28.22,395.34 29.80,396.29 31.00,394.90 32.20,396.29 33.78,395.34 34.50,397.04 36.29,396.62 36.44,398.46 38.28,398.61 37.86,400.40 39.56,401.12 38.61,402.70" fill="#f8d36a"/>
<circle cx="31" cy="403.9" r="6.4" fill="#f5c035" stroke="#c98a30" stroke-width="1.1"/>
<text transform="translate(31,406.9) scale(1.45,1)" font-size="8.3" fill="#b04e2a" text-anchor="middle" font-weight="bold" font-family="Liberation Serif, serif">1</text>
<text transform="translate(404.30,372.20) scale(1,1.12)" font-size="6" fill="#686868" text-anchor="start" font-weight="bold" letter-spacing="0.3">TRENDING CAR MOST SERVICED</text>
<text transform="translate(407.10,386.10) scale(1,1.12)" font-size="6" fill="#5e5e5e" text-anchor="start" font-weight="bold" >Rank</text>
<text transform="translate(479.10,386.10) scale(1,1.12)" font-size="6" fill="#5e5e5e" text-anchor="start" font-weight="bold" >Car</text>
<path d="M404,391.1 H661.2" stroke="#e6e6e6" stroke-width="0.8"/>
<text transform="translate(407.10,401.00) scale(1,1.12)" font-size="5.7" fill="#8a8a8a" text-anchor="start" font-weight="normal" >1</text>
<text transform="translate(479.10,401.00) scale(1,1.12)" font-size="5.7" fill="#8a8a8a" text-anchor="start" font-weight="normal" >Honda Brio</text>
<path d="M404,406.30 H661.2" stroke="#ececec" stroke-width="0.6"/>
<text transform="translate(407.10,415.80) scale(1,1.12)" font-size="5.7" fill="#8a8a8a" text-anchor="start" font-weight="normal" >2</text>
<text transform="translate(479.10,415.80) scale(1,1.12)" font-size="5.7" fill="#8a8a8a" text-anchor="start" font-weight="normal" >Honda City</text>
<path d="M404,421.15 H661.2" stroke="#ececec" stroke-width="0.6"/>
<text transform="translate(407.10,430.60) scale(1,1.12)" font-size="5.7" fill="#8a8a8a" text-anchor="start" font-weight="normal" >3</text>
<text transform="translate(479.10,430.60) scale(1,1.12)" font-size="5.7" fill="#8a8a8a" text-anchor="start" font-weight="normal" >Audi A5</text>
<path d="M404,436.00 H661.2" stroke="#ececec" stroke-width="0.6"/>
<text transform="translate(407.10,445.40) scale(1,1.12)" font-size="5.7" fill="#8a8a8a" text-anchor="start" font-weight="normal" >4</text>
<text transform="translate(479.10,445.40) scale(1,1.12)" font-size="5.7" fill="#8a8a8a" text-anchor="start" font-weight="normal" >Audi A3</text>
<path d="M404,450.85 H661.2" stroke="#ececec" stroke-width="0.6"/>
<text transform="translate(407.10,460.20) scale(1,1.12)" font-size="5.7" fill="#8a8a8a" text-anchor="start" font-weight="normal" >5</text>
<text transform="translate(479.10,460.20) scale(1,1.12)" font-size="5.7" fill="#8a8a8a" text-anchor="start" font-weight="normal" >Audi A4</text>
<path d="M404,465.70 H661.2" stroke="#ececec" stroke-width="0.6"/>
<text transform="translate(407.10,475.00) scale(1,1.12)" font-size="5.7" fill="#8a8a8a" text-anchor="start" font-weight="normal" >6</text>
<text transform="translate(479.10,475.00) scale(1,1.12)" font-size="5.7" fill="#8a8a8a" text-anchor="start" font-weight="normal" >Volkswagen Lavida</text>
<path d="M404,480.55 H661.2" stroke="#ececec" stroke-width="0.6"/>
<text transform="translate(407.10,489.80) scale(1,1.12)" font-size="5.7" fill="#8a8a8a" text-anchor="start" font-weight="normal" >7</text>
<text transform="translate(479.10,489.80) scale(1,1.12)" font-size="5.7" fill="#8a8a8a" text-anchor="start" font-weight="normal" >Audi Q5</text>
<path d="M404,495.40 H661.2" stroke="#ececec" stroke-width="0.6"/>
<text transform="translate(407.10,504.60) scale(1,1.12)" font-size="5.7" fill="#8a8a8a" text-anchor="start" font-weight="normal" >8</text>
<text transform="translate(479.10,504.60) scale(1,1.12)" font-size="5.7" fill="#8a8a8a" text-anchor="start" font-weight="normal" >Audi A8</text>
<path d="M404,510.25 H661.2" stroke="#ececec" stroke-width="0.6"/>
<text transform="translate(407.10,519.40) scale(1,1.12)" font-size="5.7" fill="#8a8a8a" text-anchor="start" font-weight="normal" >9</text>
<text transform="translate(479.10,519.40) scale(1,1.12)" font-size="5.7" fill="#8a8a8a" text-anchor="start" font-weight="normal" >Maxus D60</text>
<path d="M404,525.10 H661.2" stroke="#ececec" stroke-width="0.6"/>
<text transform="translate(407.10,534.20) scale(1,1.12)" font-size="5.7" fill="#8a8a8a" text-anchor="start" font-weight="normal" >10</text>
<text transform="translate(479.10,534.20) scale(1,1.12)" font-size="5.7" fill="#8a8a8a" text-anchor="start" font-weight="normal" >Audi A7</text>
<path d="M404,539.95 H661.2" stroke="#ececec" stroke-width="0.6"/>
<text transform="translate(407.10,549.00) scale(1,1.12)" font-size="5.7" fill="#8a8a8a" text-anchor="start" font-weight="normal" >11</text>
<text transform="translate(479.10,549.00) scale(1,1.12)" font-size="5.7" fill="#8a8a8a" text-anchor="start" font-weight="normal" >Audi Q7</text>
<path d="M404,554.80 H661.2" stroke="#ececec" stroke-width="0.6"/>
<text transform="translate(407.10,563.80) scale(1,1.12)" font-size="5.7" fill="#8a8a8a" text-anchor="start" font-weight="normal" >12</text>
<text transform="translate(479.10,563.80) scale(1,1.12)" font-size="5.7" fill="#8a8a8a" text-anchor="start" font-weight="normal" >Audi A6</text>
<path d="M404,569.65 H661.2" stroke="#ececec" stroke-width="0.6"/>
<text transform="translate(407.10,578.60) scale(1,1.12)" font-size="5.7" fill="#8a8a8a" text-anchor="start" font-weight="normal" >13</text>
<text transform="translate(479.10,578.60) scale(1,1.12)" font-size="5.7" fill="#8a8a8a" text-anchor="start" font-weight="normal" >Audi Q2</text>
<rect x="0" y="0" width="675" height="9" fill="#353c49" />
<rect x="0" y="9" width="675" height="1" fill="#9ea2a8" />
<rect x="0" y="10" width="675" height="1" fill="#f1f1f1" />
<path d="M0,337.4 H8" stroke="#ececec" stroke-width="0.6"/>
<path d="M0,365.4 H8 M672,365.4 H675" stroke="#c8c8c8" stroke-width="0.6"/>
<path d="M0,373.4 H8 M672,373.4 H675" stroke="#c8c8c8" stroke-width="0.6"/>
<path d="M0,381.4 H8 M672,381.4 H675" stroke="#c8c8c8" stroke-width="0.6"/>
<path d="M0,389.4 H8 M672,389.4 H675" stroke="#c8c8c8" stroke-width="0.6"/>
<path d="M0,397.4 H8 M672,397.4 H675" stroke="#c8c8c8" stroke-width="0.6"/>
<path d="M0,405.4 H8 M672,405.4 H675" stroke="#c8c8c8" stroke-width="0.6"/>
<path d="M0,413.4 H8 M672,413.4 H675" stroke="#c8c8c8" stroke-width="0.6"/>
<path d="M0,421.4 H8 M672,421.4 H675" stroke="#c8c8c8" stroke-width="0.6"/>
<path d="M0,429.4 H8 M672,429.4 H675" stroke="#c8c8c8" stroke-width="0.6"/>
<path d="M0,437.4 H8 M672,437.4 H675" stroke="#c8c8c8" stroke-width="0.6"/>
<path d="M0,445.4 H8 M672,445.4 H675" stroke="#c8c8c8" stroke-width="0.6"/>
<path d="M0,453.4 H8 M672,453.4 H675" stroke="#c8c8c8" stroke-width="0.6"/>
<path d="M0,461.4 H8 M672,461.4 H675" stroke="#c8c8c8" stroke-width="0.6"/>
<path d="M0,469.4 H8 M672,469.4 H675" stroke="#c8c8c8" stroke-width="0.6"/>
<path d="M0,477.4 H8 M672,477.4 H675" stroke="#c8c8c8" stroke-width="0.6"/>
<path d="M0,485.4 H8 M672,485.4 H675" stroke="#c8c8c8" stroke-width="0.6"/>
<path d="M0,493.4 H8 M672,493.4 H675" stroke="#c8c8c8" stroke-width="0.6"/>
<path d="M0,501.4 H8 M672,501.4 H675" stroke="#c8c8c8" stroke-width="0.6"/>
<path d="M0,509.4 H8 M672,509.4 H675" stroke="#c8c8c8" stroke-width="0.6"/>
<path d="M0,517.4 H8 M672,517.4 H675" stroke="#c8c8c8" stroke-width="0.6"/>
<path d="M0,525.4 H8 M672,525.4 H675" stroke="#c8c8c8" stroke-width="0.6"/>
<path d="M0,533.4 H8 M672,533.4 H675" stroke="#c8c8c8" stroke-width="0.6"/>
<path d="M0,541.4 H8 M672,541.4 H675" stroke="#c8c8c8" stroke-width="0.6"/>
<path d="M0,549.4 H8 M672,549.4 H675" stroke="#c8c8c8" stroke-width="0.6"/>
<path d="M0,557.4 H8 M672,557.4 H675" stroke="#c8c8c8" stroke-width="0.6"/>
<path d="M0,565.4 H8 M672,565.4 H675" stroke="#c8c8c8" stroke-width="0.6"/>
<path d="M0,573.4 H8 M672,573.4 H675" stroke="#c8c8c8" stroke-width="0.6"/>
<path d="M0,581.4 H8 M672,581.4 H675" stroke="#c8c8c8" stroke-width="0.6"/>
<path d="M0,589.4 H8 M672,589.4 H675" stroke="#c8c8c8" stroke-width="0.6"/>
<path d="M0,597.4 H8 M672,597.4 H675" stroke="#c8c8c8" stroke-width="0.6"/>
<path d="M13.00,600 V604" stroke="#c8c8c8" stroke-width="0.6"/>
<path d="M38.96,600 V604" stroke="#c8c8c8" stroke-width="0.6"/>
<path d="M64.92,600 V604" stroke="#c8c8c8" stroke-width="0.6"/>
<path d="M90.88,600 V604" stroke="#c8c8c8" stroke-width="0.6"/>
<path d="M116.84,600 V604" stroke="#c8c8c8" stroke-width="0.6"/>
<path d="M142.80,600 V604" stroke="#c8c8c8" stroke-width="0.6"/>
<path d="M168.76,600 V604" stroke="#c8c8c8" stroke-width="0.6"/>
<path d="M194.72,600 V604" stroke="#c8c8c8" stroke-width="0.6"/>
<path d="M220.68,600 V604" stroke="#c8c8c8" stroke-width="0.6"/>
<path d="M246.64,600 V604" stroke="#c8c8c8" stroke-width="0.6"/>
<path d="M272.60,600 V604" stroke="#c8c8c8" stroke-width="0.6"/>
<path d="M298.56,600 V604" stroke="#c8c8c8" stroke-width="0.6"/>
<path d="M324.52,600 V604" stroke="#c8c8c8" stroke-width="0.6"/>
<path d="M350.48,600 V604" stroke="#c8c8c8" stroke-width="0.6"/>
<path d="M376.44,600 V604" stroke="#c8c8c8" stroke-width="0.6"/>
<path d="M402.40,600 V604" stroke="#c8c8c8" stroke-width="0.6"/>
<path d="M428.36,600 V604" stroke="#c8c8c8" stroke-width="0.6"/>
<path d="M454.32,600 V604" stroke="#c8c8c8" stroke-width="0.6"/>
<path d="M480.28,600 V604" stroke="#c8c8c8" stroke-width="0.6"/>
<path d="M506.24,600 V604" stroke="#c8c8c8" stroke-width="0.6"/>
<path d="M532.20,600 V604" stroke="#c8c8c8" stroke-width="0.6"/>
<path d="M558.16,600 V604" stroke="#c8c8c8" stroke-width="0.6"/>
<path d="M584.12,600 V604" stroke="#c8c8c8" stroke-width="0.6"/>
<path d="M610.08,600 V604" stroke="#c8c8c8" stroke-width="0.6"/>
<path d="M636.04,600 V604" stroke="#c8c8c8" stroke-width="0.6"/>
<path d="M662.00,600 V604" stroke="#c8c8c8" stroke-width="0.6"/>
<rect x="5.5" y="4.5" width="667" height="595" fill="none" stroke="#ff0000" stroke-width="1"/>
</svg>
</body></html>
